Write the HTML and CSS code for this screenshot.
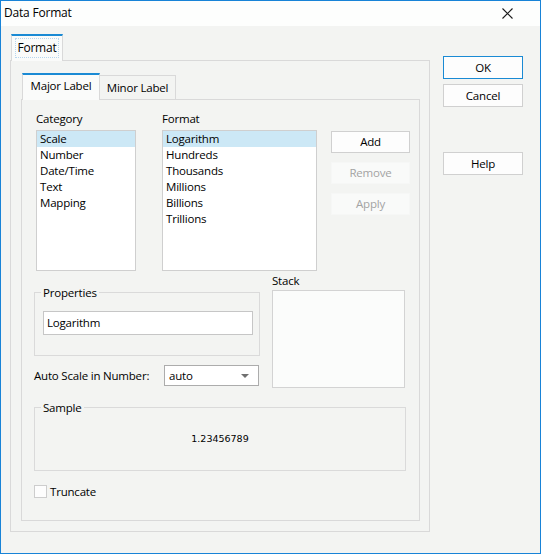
FILE: index.html
```html
<!DOCTYPE html>
<html>
<head>
<meta charset="utf-8">
<link rel="stylesheet" href="styles.css">
</head>
<body>
<div class="window">
  <div class="titlebar">
    <span class="title">Data Format</span>
    <svg class="close" width="11" height="11" viewBox="0 0 11 11"><path d="M0.5 0.5 L10.5 10.5 M10.5 0.5 L0.5 10.5" stroke="#1a1a1a" stroke-width="1.1" fill="none"/></svg>
  </div>
  <div class="content">
    <div class="main">
      <div class="tabstrip outer-strip">
        <div class="tab active outer-tab"><span class="focus">Format</span></div>
      </div>
      <div class="panel outer-panel">
        <div class="tabstrip inner-strip">
          <div class="tab active major">Major Label</div>
          <div class="tab minor">Minor Label</div>
        </div>
        <div class="panel inner-panel">
          <div class="top-row">
            <div class="col cat-col">
              <div class="label">Category</div>
              <ul class="list cat-list">
                <li class="sel">Scale</li>
                <li>Number</li>
                <li>Date/Time</li>
                <li>Text</li>
                <li>Mapping</li>
              </ul>
            </div>
            <div class="col fmt-col">
              <div class="label">Format</div>
              <ul class="list fmt-list">
                <li class="sel">Logarithm</li>
                <li>Hundreds</li>
                <li>Thousands</li>
                <li>Millions</li>
                <li>Billions</li>
                <li>Trillions</li>
              </ul>
            </div>
            <div class="col side-buttons">
              <div class="btn">Add</div>
              <div class="btn disabled">Remove</div>
              <div class="btn disabled">Apply</div>
            </div>
          </div>
          <div class="middle">
            <div class="mid-left">
              <fieldset class="group props">
                <legend>Properties</legend>
                <div class="textfield">Logarithm</div>
              </fieldset>
              <div class="auto-row">
                <span class="auto-label">Auto Scale in Number:</span>
                <div class="combo">
                  <span>auto</span>
                  <svg class="arrow" width="8" height="4" viewBox="0 0 8 4"><path d="M0 0 L8 0 L4 4 Z" fill="#707070"/></svg>
                </div>
              </div>
            </div>
            <div class="mid-right">
              <div class="label">Stack</div>
              <div class="stack-box"></div>
            </div>
          </div>
          <fieldset class="group sample">
            <legend>Sample</legend>
            <div class="sample-value">1.23456789</div>
          </fieldset>
          <div class="check-row">
            <span class="checkbox"></span>
            <span>Truncate</span>
          </div>
        </div>
      </div>
    </div>
    <div class="right-col">
      <div class="btn primary">OK</div>
      <div class="btn">Cancel</div>
      <div class="btn help">Help</div>
    </div>
  </div>
</div>
</body>
</html>
```
FILE: styles.css
```css
* { box-sizing: border-box; }
html, body { margin: 0; padding: 0; background: #f3f4f2; }
body {
  font-family: "Open Sans", "Noto Sans", "Liberation Sans", sans-serif;
  font-size: 11.5px;
  letter-spacing: -0.2px;
  color: #000;
}
.window {
  width: 541px;
  height: 554px;
  border: 1px solid #1883d7;
  background: #f3f4f2;
  display: flex;
  flex-direction: column;
}
.titlebar {
  height: 25px;
  background: #fdfefd;
  display: flex;
  align-items: center;
  justify-content: space-between;
  padding: 0 27px 1px 3px;
}
.title { font-size: 12px; line-height: 16px; }
.close { display: block; margin-top: 1px; }

.content {
  flex: 1;
  display: flex;
  padding: 8px 0 0 9px;
}
.main { width: 420px; }
.right-col {
  margin-left: 13px;
  margin-top: 22px;
  width: 80px;
  display: flex;
  flex-direction: column;
  gap: 5px;
}

.tabstrip { display: flex; align-items: flex-end; position: relative; z-index: 1; }
.tab {
  border: 1px solid #d9d9d9;
  border-bottom: none;
  line-height: 15px;
  text-align: center;
  white-space: nowrap;
}
.tab.active {
  background: #fafbfa;
  border-top: 2px solid #1a8ad4;
  margin-bottom: -1px;
}
.outer-tab {
  margin-left: 1px;
  width: 52px;
  height: 27px;
  padding: 2px 3px 0;
}
.focus {
  display: block;
  border: 1px dotted #b7d6ee;
  height: 20px;
  line-height: 18px;
  font-size: 12px;
}
.panel { border: 1px solid #d9d9d9; }
.outer-panel {
  height: 472px;
  padding: 12px 10px 0 10px;
}
.inner-strip { margin-left: 1px; }
.major {
  width: 78px;
  height: 27px;
  padding-top: 3px;
}
.minor {
  width: 77px;
  height: 24px;
  padding-top: 4px;
  margin-left: -1px;
  background: #f3f4f2;
}
.inner-panel {
  width: 399px;
  height: 422px;
  padding: 11px 0 0 12px;
}

.top-row { display: flex; margin-left: 2px; }
.label { line-height: 15px; height: 15px; }
.cat-col { width: 100px; }
.fmt-col { width: 155px; margin-left: 26px; }
.side-buttons {
  width: 79px;
  margin-left: 14px;
  padding-top: 20px;
  display: flex;
  flex-direction: column;
  gap: 9px;
}
.list {
  list-style: none;
  margin: 4px 0 0;
  padding: 0;
  height: 141px;
  background: #fff;
  border: 1px solid #cfcfcf;
}
.list li {
  height: 16px;
  line-height: 16px;
  padding-left: 3px;
  white-space: nowrap;
}
.list li.sel { background: #cce8f6; }

.btn {
  height: 23px;
  line-height: 21px;
  text-align: center;
  background: #fdfdfd;
  border: 1px solid #d0d0d0;
}
.btn.disabled {
  background: #f9faf9;
  border-color: #f6f7f6;
  color: #a3a3a3;
}
.side-buttons .btn { height: 22px; line-height: 20px; }
.btn.primary { border-color: #1a8ad4; }
.btn.help { margin-top: 40px; }

.middle {
  display: grid;
  grid-template-columns: 226px 133px;
  column-gap: 12px;
  margin-top: 2px;
}
.group {
  margin: 0;
  border: 1px solid #dadada;
  min-width: 0;
}
.group legend {
  padding: 0 2px;
  margin-left: -2px;
  line-height: 15px;
}
.props {
  margin-top: 12px;
  padding: 11px 6px 20px 8px;
}
.textfield {
  height: 24px;
  line-height: 22px;
  border: 1px solid #c6c6c6;
  background: #fff;
  padding-left: 3px;
}
.auto-row {
  display: flex;
  align-items: center;
  margin-top: 9px;
}
.auto-label { width: 130px; }
.combo {
  width: 95px;
  height: 21px;
  border: 1px solid #acacac;
  background: #fff;
  display: flex;
  align-items: center;
  justify-content: space-between;
  padding: 0 9px 0 4px;
}
.arrow { display: block; }
.stack-box {
  margin-top: 2px;
  height: 98px;
  border: 1px solid #d3d3d3;
  background: #fbfcfb;
}
.sample {
  width: 372px;
  margin-top: 12px;
  padding: 16px 8px 24px;
}
.sample-value {
  text-align: center;
  font-family: "DejaVu Sans", sans-serif;
  font-size: 9.5px;
  letter-spacing: 0;
  line-height: 15px;
}
.check-row {
  display: flex;
  align-items: center;
  margin-top: 13px;
  gap: 3px;
  line-height: 15px;
}
.checkbox {
  width: 13px;
  height: 13px;
  border: 1px solid #cdcdcd;
  background: #fdfdfd;
}
```
